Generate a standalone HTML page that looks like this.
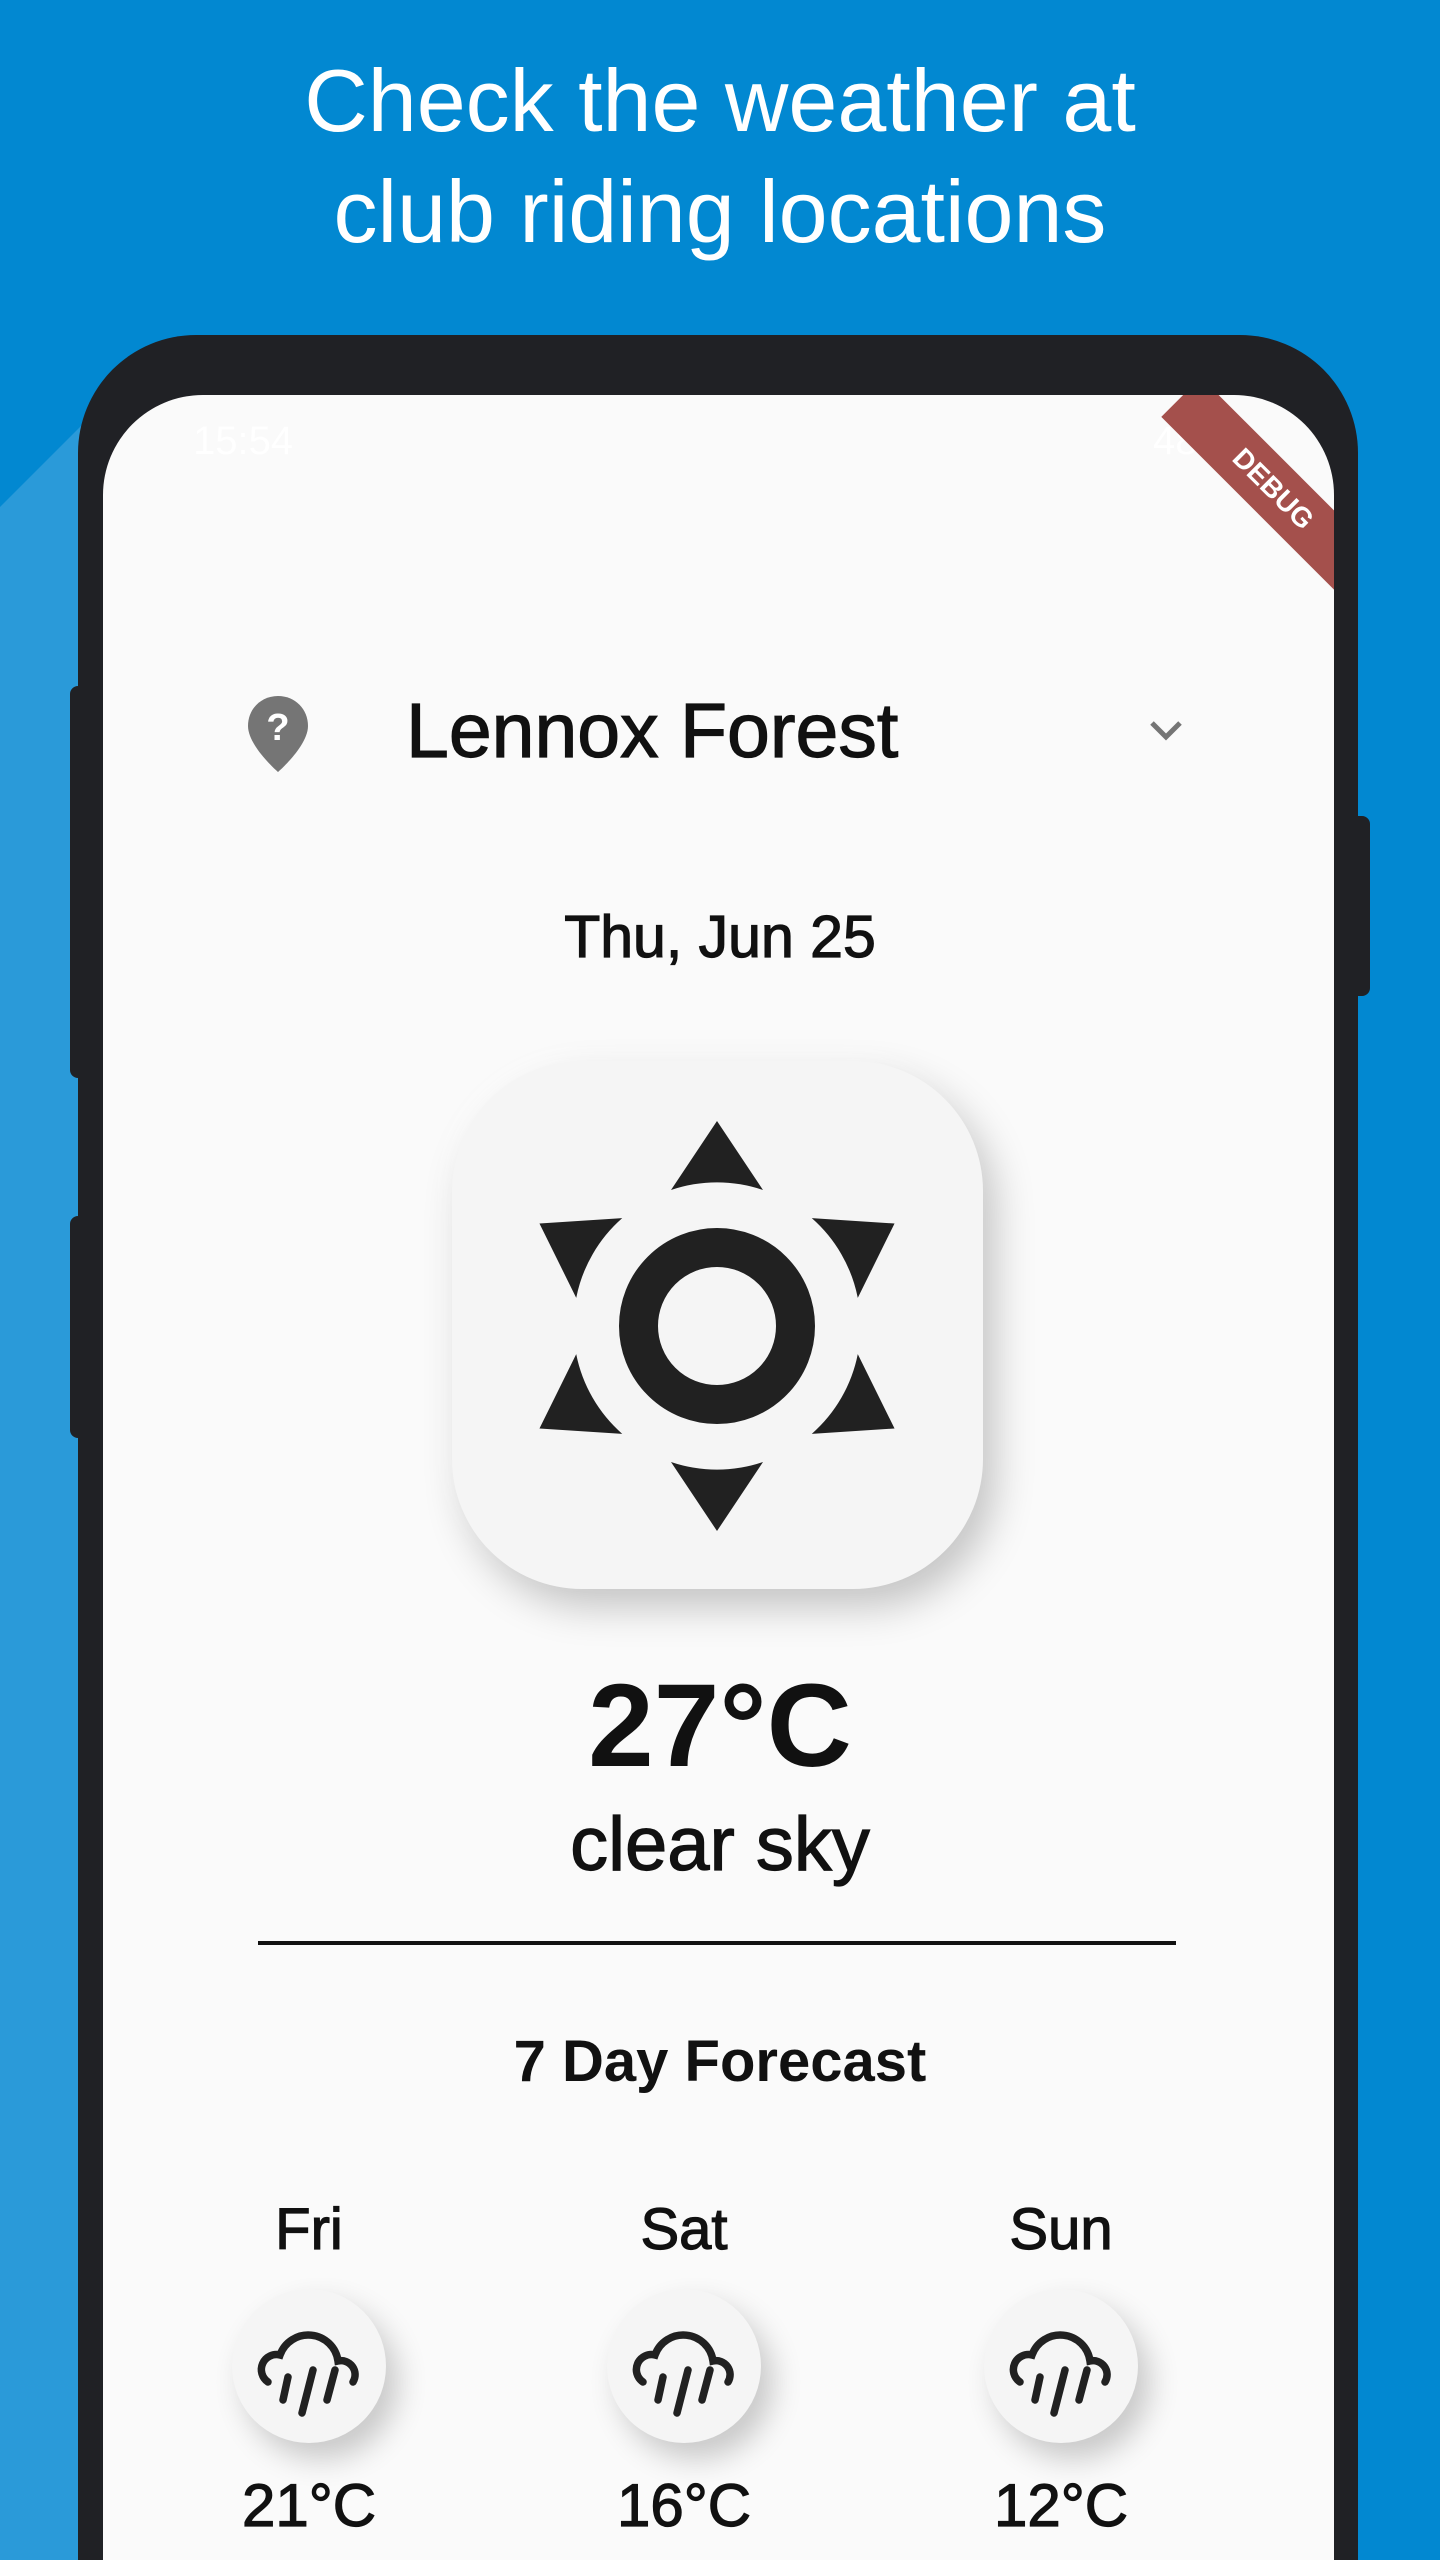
<!DOCTYPE html>
<html><head><meta charset="utf-8"><style>
*{margin:0;padding:0;box-sizing:border-box}
html,body{width:1440px;height:2560px;overflow:hidden;background:#0288d1;font-family:"Liberation Sans",Arial,sans-serif}
.abs{position:absolute}
.t{position:absolute;left:0;width:1440px;text-align:center;white-space:nowrap}
.m{-webkit-text-stroke:1.2px #111}
</style></head><body>
<svg class="abs" style="left:0;top:0" width="1440" height="2560"><polygon points="0,507 110,397 110,2560 0,2560" fill="#2a9ad9"/></svg>
<div class="t" style="top:45px;font-size:88px;line-height:111px;color:#fff">Check the weather at<br>club riding locations</div>
<div class="abs" style="left:70px;top:686px;width:20px;height:392px;background:#202125;border-radius:8px"></div>
<div class="abs" style="left:70px;top:1216px;width:20px;height:222px;background:#202125;border-radius:8px"></div>
<div class="abs" style="left:1350px;top:816px;width:20px;height:180px;background:#202125;border-radius:8px"></div>
<div class="abs" style="left:78px;top:335px;width:1280px;height:2225px;background:#202125;border-radius:118px 118px 0 0"></div>
<div class="abs" style="left:103px;top:395px;width:1231px;height:2165px;background:#fafafa;border-radius:100px 100px 0 0;overflow:hidden">
  <div class="abs" style="left:90px;top:24px;font-size:40px;color:rgba(255,255,255,0.85)">15:54</div>
  <div class="abs" style="left:1050px;top:24px;font-size:40px;color:rgba(255,255,255,0.85)">48%</div>
  <div class="abs" style="left:1040px;top:66px;width:260px;height:56px;background:#a4504c;transform:rotate(45deg);transform-origin:center;color:#fff;font-weight:bold;font-size:28px;line-height:56px;text-align:center">DEBUG</div>
</div>
<svg class="abs" style="left:244px;top:694px" width="68" height="80" viewBox="0 0 68 80">
<path d="M34 2C17 2 4 15 4 32C4 52 34 78 34 78C34 78 64 52 64 32C64 15 51 2 34 2Z" fill="#757575"/>
<text x="34" y="46" font-family="Liberation Sans" font-weight="bold" font-size="38" fill="#fff" text-anchor="middle">?</text>
</svg>
<div class="abs m" style="left:406px;top:683px;font-size:77px;line-height:96px;color:#111;white-space:nowrap">Lennox Forest</div>
<svg class="abs" style="left:1148px;top:718px" width="36" height="26"><path d="M4 5L18 19L32 5" fill="none" stroke="#757575" stroke-width="5"/></svg>
<div class="t m" style="top:902px;font-size:59px;line-height:70px;color:#111">Thu, Jun 25</div>
<div class="abs" style="left:452px;top:1061px;width:531px;height:528px;background:#f5f5f5;border-radius:130px;box-shadow:12px 18px 40px rgba(0,0,0,0.22),-6px -6px 20px rgba(255,255,255,0.8)"></div>
<svg class="abs" style="left:0;top:0" width="1440" height="2560">
<g fill="#212121" transform="translate(0 -19)">
<circle cx="717" cy="1345" r="78.5" fill="none" stroke="#212121" stroke-width="39"/>
<path d="M717 1140L763 1209A143 143 0 0 0 671 1209Z"/>
<path transform="rotate(60 717 1345)" d="M717 1140L763 1209A143 143 0 0 0 671 1209Z"/>
<path transform="rotate(120 717 1345)" d="M717 1140L763 1209A143 143 0 0 0 671 1209Z"/>
<path transform="rotate(180 717 1345)" d="M717 1140L763 1209A143 143 0 0 0 671 1209Z"/>
<path transform="rotate(240 717 1345)" d="M717 1140L763 1209A143 143 0 0 0 671 1209Z"/>
<path transform="rotate(300 717 1345)" d="M717 1140L763 1209A143 143 0 0 0 671 1209Z"/>
</g>
<line x1="258" y1="1943" x2="1176" y2="1943" stroke="#111" stroke-width="4"/>
</svg>
<div class="t" style="top:1656px;font-size:118px;line-height:140px;font-weight:bold;color:#111">27°C</div>
<div class="t m" style="top:1800px;font-size:76px;line-height:90px;color:#111">clear sky</div>
<div class="t" style="top:2027px;font-size:58px;line-height:70px;font-weight:bold;color:#111">7 Day Forecast</div>
<div class="abs" style="left:232px;top:2289px;width:154px;height:154px;border-radius:50%;background:#f5f5f5;box-shadow:12px 16px 30px rgba(0,0,0,0.2)"></div>
<div class="abs" style="left:607px;top:2289px;width:154px;height:154px;border-radius:50%;background:#f5f5f5;box-shadow:12px 16px 30px rgba(0,0,0,0.2)"></div>
<div class="abs" style="left:984px;top:2289px;width:154px;height:154px;border-radius:50%;background:#f5f5f5;box-shadow:12px 16px 30px rgba(0,0,0,0.2)"></div>
<svg class="abs" style="left:0;top:0" width="1440" height="2560">
<defs><g id="rain" fill="none" stroke="#212121" stroke-width="7.5" stroke-linecap="round">
<path d="M-42 15A15 15 0 0 1 -30 -12A30 30 0 0 1 28 -6A14 14 0 0 1 43 15"/>
<path d="M-22 10L-27 33M3 3L-8 46M25 3L17 33"/>
</g></defs>
<use href="#rain" transform="translate(310 2367)"/>
<use href="#rain" transform="translate(685 2367)"/>
<use href="#rain" transform="translate(1062 2367)"/>
</svg>
<div class="abs m" style="left:159px;top:2196px;width:300px;text-align:center;font-size:58px;line-height:68px;color:#111">Fri</div>
<div class="abs m" style="left:534px;top:2196px;width:300px;text-align:center;font-size:58px;line-height:68px;color:#111">Sat</div>
<div class="abs m" style="left:911px;top:2196px;width:300px;text-align:center;font-size:58px;line-height:68px;color:#111">Sun</div>
<div class="abs m" style="left:159px;top:2471px;width:300px;text-align:center;font-size:60px;line-height:70px;color:#111">21°C</div>
<div class="abs m" style="left:534px;top:2471px;width:300px;text-align:center;font-size:60px;line-height:70px;color:#111">16°C</div>
<div class="abs m" style="left:911px;top:2471px;width:300px;text-align:center;font-size:60px;line-height:70px;color:#111">12°C</div>
</body></html>
